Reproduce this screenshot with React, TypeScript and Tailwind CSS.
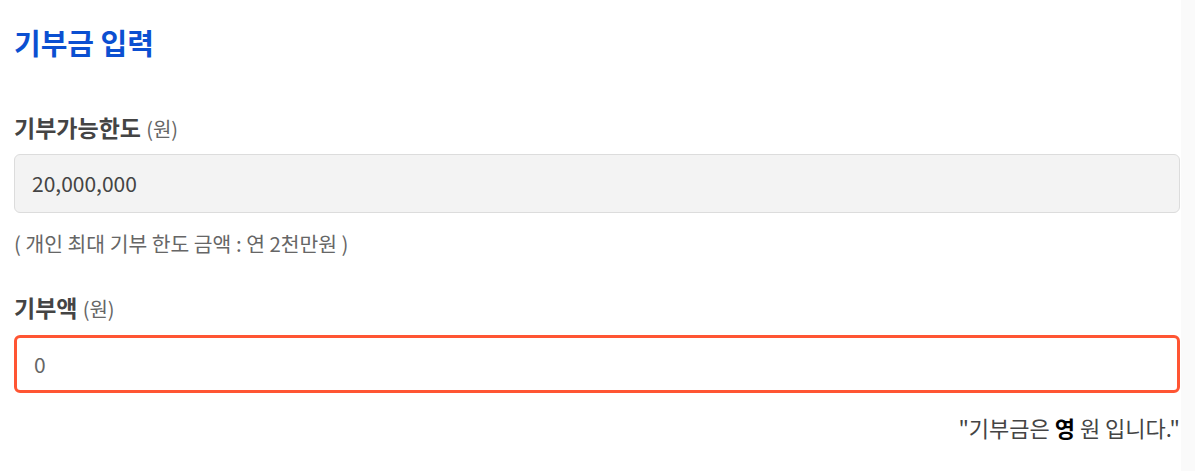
import * as React from "react"

const font = { fontFamily: '"Noto Sans CJK KR", "Noto Sans", sans-serif' }

export default function App() {
  const [amount, setAmount] = React.useState("0")

  return (
    <div className="flex w-[1195px] h-[471px] bg-white" style={font}>
      <div className="flex-1 pl-[14px] pr-[1px]">
        <h2 className="pt-[22px] text-[29px] leading-[40px] font-bold text-[#0b4fd1]">기부금 입력</h2>

        <div className="mt-[51px]">
          <label className="block text-[23px] leading-[28px] font-bold text-[#444]">
            기부가능한도 <span className="text-[20px] font-normal text-[#666]">(원)</span>
          </label>
          <div className="mt-[11px] h-[59px] flex items-center px-[17px] rounded-[6px] border border-[#dcdcdc] bg-[#f3f3f3] text-[21px] text-[#444]">
            20,000,000
          </div>
          <p className="mt-[16px] text-[20.4px] leading-[28px] text-[#666]">( 개인 최대 기부 한도 금액 : 연 2천만원 )</p>
        </div>

        <div className="mt-[36px]">
          <label className="block text-[23px] leading-[28px] font-bold text-[#444]">
            기부액 <span className="text-[20px] font-normal text-[#666]">(원)</span>
          </label>
          <input
            value={amount}
            onChange={(e) => setAmount(e.target.value)}
            className="mt-[12px] w-full h-[58px] px-[17px] rounded-[6px] border-[3px] border-[#ff5533] bg-white text-[21px] text-[#666] outline-none"
            style={font}
          />
          <p className="mt-[19px] text-right text-[22px] leading-[30px] text-[#444]">
            "기부금은 <b className="text-black">영</b> 원 입니다."
          </p>
        </div>
      </div>
      <div className="w-[14px] bg-[#fafafa]" />
    </div>
  )
}
